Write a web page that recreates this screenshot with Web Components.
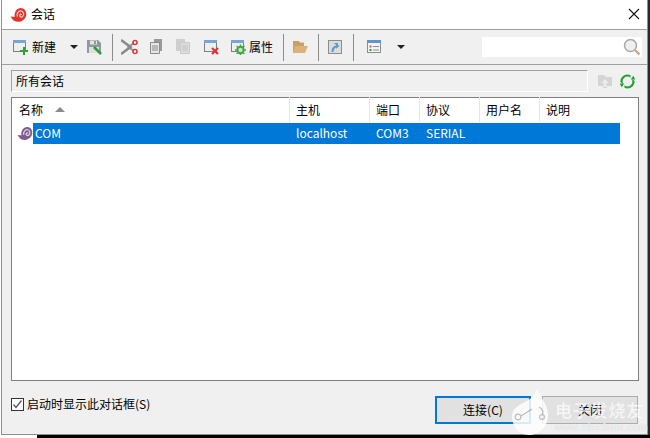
<!DOCTYPE html>
<html lang="zh"><head><meta charset="utf-8">
<style>
html,body{margin:0;padding:0;background:#fff;width:650px;height:438px;overflow:hidden}
body{font:12px "Noto Sans CJK SC","Liberation Sans",sans-serif;color:#000}
</style></head><body>
<session-dialog>
  <title-bar slot="title">会话</title-bar>
  <tool-bar slot="toolbar"></tool-bar>
  <path-bar slot="path">所有会话</path-bar>
  <session-list slot="list"></session-list>
  <dialog-footer slot="footer"></dialog-footer>
</session-dialog>
<script>
function def(name,html){customElements.define(name,class extends HTMLElement{constructor(){super();this.attachShadow({mode:'open'}).innerHTML=html;}});}
const FONT='"Noto Sans CJK SC","Liberation Sans",sans-serif';
const SNAIL=(a,b)=>`<path d="M.5 9.500C2.500 9.500 3.500 10 4.500 9.800C3.800 5 6.500 1 10.500 1C13.800 1 16 3.800 16 7C16 11.500 12.300 14.800 8 14.800C4.500 14.800 1.800 12.800 .5 9.500Z" fill="${a}"/><path d="M7 9.500C6 6.500 8.500 3.500 11 4C13.500 4.500 14.300 8 12.300 9.600C10.800 10.800 8.800 9.500 9.600 7.800C10.100 6.900 11.400 7.100 11.400 8" fill="none" stroke="${b}" stroke-width="1.200"/>`;
def('session-dialog',`<style>
:host{display:block;position:relative;width:650px;height:438px;overflow:hidden}
.win{box-sizing:border-box;width:647px;height:435px;margin-left:1px;border:1px solid #8f8f8f;border-top:0;background:#f0f0f0;display:flex;flex-direction:column}
.edge{position:absolute;right:0;top:0;width:2px;height:438px;background:#2a2a2a}
.shadow{position:absolute;left:37px;right:0;bottom:0;height:3px;background:#000}
.wm{position:absolute;left:511px;top:384px;width:135px;height:51px;color:#fff}
.wm svg{position:absolute;left:0;top:0;opacity:.85}
.wm b{position:absolute;left:44px;top:16px;font:500 17px/20px ${FONT};letter-spacing:.8px;white-space:nowrap;color:rgba(255,255,255,.72)}
.wm i{position:absolute;left:44px;top:38px;font:normal 10px/11px "Liberation Sans",sans-serif;letter-spacing:.65px;white-space:nowrap;color:rgba(255,255,255,.9);text-shadow:0 0 1px #b5b5b5}
.body{flex:1;display:flex;flex-direction:column;min-height:0}
</style>
<div class="win"><slot name="title"></slot><slot name="toolbar"></slot><div class="body"><slot name="path"></slot><slot name="list"></slot><slot name="footer"></slot></div></div>
<div class="edge"></div><div class="shadow"></div>
<div class="wm"><svg width="44" height="51" viewBox="0 0 44 51"><path d="M26 4C28 12 37 20 37 31C37 44 27 51 18 51C8 51 1 42 1 33C1 22 12 20 19 15C23 12 25 8 26 4Z" fill="#fff"/><g fill="none" stroke="#b8b8b8" stroke-width="1.200"><circle cx="7" cy="33" r="2.800"/><path d="M10 32L21 25"/><path d="M28 23C32 25 33 29 31 31"/><circle cx="31" cy="33" r="2.400"/></g></svg><b>电子发烧友</b><i>www.elecfans.com</i></div>`);
def('title-bar',`<style>
:host{display:flex;align-items:center;height:29px;background:#fff;border-bottom:1px solid #a0a0a0;flex:none;font:12px ${FONT}}
svg{display:block;flex:none}.ic{margin:0 4px 0 8px}
.t{flex:1;line-height:16px;margin-top:-2px}
.x{margin-right:7px;margin-top:-2px}
</style>
<svg class="ic" width="17" height="16" viewBox="0 0 16.500 16">${SNAIL('#e4342a','#fdd9d5')}</svg>
<span class="t"><slot></slot></span>
<svg class="x" width="12" height="12" viewBox="0 0 12 12"><path d="M1 1L11 11M11 1L1 11" stroke="#111" stroke-width="1.100"/></svg>`);
const win=(extra='')=>`<rect x="1.500" y="1.500" width="12" height="11" fill="#eee" stroke="#7f7f7f"/><rect x="1" y="1" width="13" height="3" fill="#76a5d8"/>${extra}`;
def('tool-bar',`<style>
:host{display:flex;align-items:center;height:35px;flex:none;box-sizing:border-box;border-bottom:1px solid #a0a0a0;font:12px ${FONT};padding-left:10px}
svg{display:block;flex:none}
.s{width:1px;height:27px;background:#8c8c8c;flex:none}
.t{white-space:nowrap;line-height:16px}
.ar{width:0;height:0;border:4px solid transparent;border-top:4px solid #222;border-bottom:0;flex:none}
.search{margin-left:auto;margin-right:5px;width:160px;height:20px;background:#fff;display:flex;justify-content:flex-end;align-items:center;margin-top:-1px}
</style>
<svg width="16" height="16" viewBox="0 0 16 16">${win('<path d="M12 8V16M8 12H16" stroke="#2da42d" stroke-width="2"/>')}</svg>
<span class="t" style="margin-left:4px">新建</span>
<span class="ar" style="margin-left:14px"></span>
<svg style="margin-left:9px" width="16" height="16" viewBox="0 0 16 16"><path d="M0 1H11L14 4V14H0Z" fill="#8d9aa0"/><rect x="3" y="1.500" width="7" height="4" fill="#e4e4e4"/><rect x="7" y="2" width="2" height="3" fill="#8d9aa0"/><rect x="2" y="8" width="10" height="6" fill="#dedede"/><path d="M7 8L14 15" stroke="#2f9a3f" stroke-width="2.600"/></svg>
<span class="s" style="margin-left:9px"></span>
<svg style="margin-left:8px" width="17" height="16" viewBox="0 0 17 16"><path d="M0 1L9.500 8L0 15" fill="none" stroke="#8a8a8a" stroke-width="2.600"/><path d="M14 3.500L7 8L14 12.500" fill="none" stroke="#8a8a8a" stroke-width="1.500"/><circle cx="14" cy="3.500" r="2" fill="#fff" stroke="#d83a3a" stroke-width="1.600"/><circle cx="14" cy="12.500" r="2" fill="#fff" stroke="#d83a3a" stroke-width="1.600"/></svg>
<svg style="margin-left:10px" width="16" height="16" viewBox="0 0 16 16"><path d="M6 0H14V12H6Z" fill="#9a9a9a"/><path d="M2.500 3.500H11.500V14.500H2.500Z" fill="#e6e6e6" stroke="#8a8a8a"/><path d="M4 7H10M4 9H10M4 11H10" stroke="#8a8a8a"/></svg>
<svg style="margin-left:12px" width="16" height="16" viewBox="0 0 16 16"><path d="M0 0H9V12H0Z" fill="#cfcfcf"/><path d="M4.500 3.500H13.500V14.500H4.500Z" fill="#dcdcdc" stroke="#cacaca"/><path d="M6 7H12M6 9H12M6 11H12" stroke="#c4c4c4"/></svg>
<svg style="margin-left:11px" width="16" height="16" viewBox="0 0 16 16">${win('<path d="M9 9L15 15M15 9L9 15" stroke="#e13232" stroke-width="2.200"/>')}</svg>
<svg style="margin-left:11px" width="16" height="16" viewBox="0 0 16 16">${win('<circle cx="10.500" cy="11" r="3.200" fill="#bfe5bf" stroke="#3fa53f" stroke-width="2"/><path d="M10.500 5.500V16.500M5 11H16M6.600 7.100L14.400 14.900M14.400 7.100L6.600 14.900" stroke="#3fa53f" stroke-width="1.400" stroke-dasharray="1.600 7.800"/>')}</svg>
<span class="t" style="margin-left:3px">属性</span>
<span class="s" style="margin-left:10px"></span>
<svg style="margin-left:7px" width="17" height="16" viewBox="0 0 17 16"><path d="M2 2H8L9 3.500H13V14H2Z" fill="#c9a066"/><path d="M4 7H17L14 14H2Z" fill="#dcb27b"/></svg>
<span class="s" style="margin-left:10px"></span>
<svg style="margin-left:9px" width="16" height="16" viewBox="0 0 16 16"><rect x=".500" y="1.500" width="13" height="13" fill="#dcdcdc" stroke="#8d8d8d"/><path d="M3.500 13C3.500 9 5.500 7 8 6.500V4.500L11.500 7L8 9.800V8.500C6.500 9 5.500 11 5.500 13Z" fill="#5b9bd5"/><path d="M5.500 4H10V7Z" fill="#5b9bd5"/></svg>
<span class="s" style="margin-left:9px"></span>
<svg style="margin-left:13px" width="16" height="16" viewBox="0 0 16 16"><rect x=".500" y="1.500" width="13" height="12" fill="#f4f4f4" stroke="#8d8d8d"/><rect x="0" y="1" width="14" height="3" fill="#5f94cf"/><rect x="2.500" y="6.500" width="2" height="2" fill="#e85b4e"/><rect x="2.500" y="10" width="2" height="2" fill="#2da42d"/><path d="M6 7.500H12M6 11H12" stroke="#8d8d8d"/></svg>
<span class="ar" style="margin-left:14px"></span>
<div class="search"><svg style="margin-right:1px" width="18" height="18" viewBox="0 0 18 18"><circle cx="7.500" cy="7.500" r="6" fill="#efefef" stroke="#a8a8a8" stroke-width="1.500"/><path d="M12 12L16.500 16.500" stroke="#d5a778" stroke-width="2.400"/></svg></div>`);
def('path-bar',`<style>
:host{display:flex;align-items:center;flex:none;margin-top:5px;height:22px;padding-left:9px;font:12px ${FONT}}
.box{box-sizing:border-box;width:577px;height:22px;border:1px solid #a0a0a0;border-right-color:#fff;border-bottom-color:#fff;padding:0 0 0 4px;line-height:19px}
svg{display:block;flex:none}
</style><div class="box"><slot></slot></div>
<svg style="margin-left:9px" width="16" height="16" viewBox="0 0 16 16"><path d="M1 2H7L9 4H15V13H10V15H6V13H1Z" fill="#d5d5d5"/><path d="M8 6L11.500 10H9.500V14H6.500V10H4.500Z" fill="#ececec"/></svg>
<svg style="margin-left:6px" width="17" height="17" viewBox="0 0 17 17"><circle cx="8.500" cy="8.500" r="6" fill="none" stroke="#23a12e" stroke-width="2.200"/><path d="M11.500 1L16 1L16 8L11.500 5.500Z M5.500 16L1 16L1 9L5.500 11.500Z" fill="#f0f0f0"/><path d="M11.800 6.500H16.300L14.300 2.700Z M5.200 10.500H.7L2.700 14.300Z" fill="#23a12e"/></svg>`);
def('session-list',`<style>
:host{display:block;flex:none;box-sizing:border-box;margin:5px 0 0 9px;width:628px;height:284px;background:#fff;border:1px solid #7f7f7f;font:12px ${FONT}}
.h{display:grid;grid-template-columns:278px 80px 50px 60px 60px 80px;height:25px;margin-top:-1px}
.h span{box-sizing:border-box;border-right:1px solid #e5e5e5;padding-left:6px;line-height:24px;display:flex;align-items:center;white-space:nowrap}
.h span:first-child{padding-left:7px}
.h span:last-child{border:0}
.tri{width:0;height:0;border:5px solid transparent;border-bottom:5px solid #8a8a8a;border-top:0;margin-left:12px}
.row{display:flex;height:21px;margin-top:1px}
.row svg{display:block;flex:none;margin:3px 0 0 5px}
.sel{display:grid;grid-template-columns:257px 80px 50px 60px 60px 80px;width:587px;background:#0078d7;color:#fff;line-height:20px}
.sel span{padding-left:6px;white-space:nowrap}.sel span:first-child{padding-left:2px}
</style>
<div class="h"><span>名称<i class="tri"></i></span><span>主机</span><span>端口</span><span>协议</span><span>用户名</span><span>说明</span></div>
<div class="row"><svg width="16" height="15" viewBox="0 0 16.500 16">${SNAIL('#7e5c8f','#e3d7ea')}</svg>
<div class="sel"><span>COM</span><span>localhost</span><span>COM3</span><span>SERIAL</span><span></span><span></span></div></div>`);
def('dialog-footer',`<style>
:host{flex:1;display:flex;align-items:flex-start;padding:0 9px 0 9px;font:12px ${FONT}}
.chk{display:flex;align-items:center;margin-top:15px;white-space:nowrap;line-height:16px}
.box{box-sizing:border-box;width:13px;height:13px;border:1px solid #333;background:#fff;margin-right:3px}
.box svg{display:block}
.btns{margin-left:auto;display:flex;gap:11px;margin-top:15px}
button{box-sizing:border-box;width:96px;height:28px;background:#e1e1e1;border:1px solid #adadad;font:12px ${FONT};color:#000;padding:0 0 2px}
.d{border:2px solid #0078d7}
</style>
<label class="chk"><span class="box"><svg width="11" height="11" viewBox="0 0 11 11"><path d="M1.500 5.500L4 8.500L9.500 1.500" fill="none" stroke="#555" stroke-width="1.300"/></svg></span>启动时显示此对话框(S)</label>
<div class="btns"><button class="d">连接(C)</button><button>关闭</button></div>`);
</script>
</body></html>
